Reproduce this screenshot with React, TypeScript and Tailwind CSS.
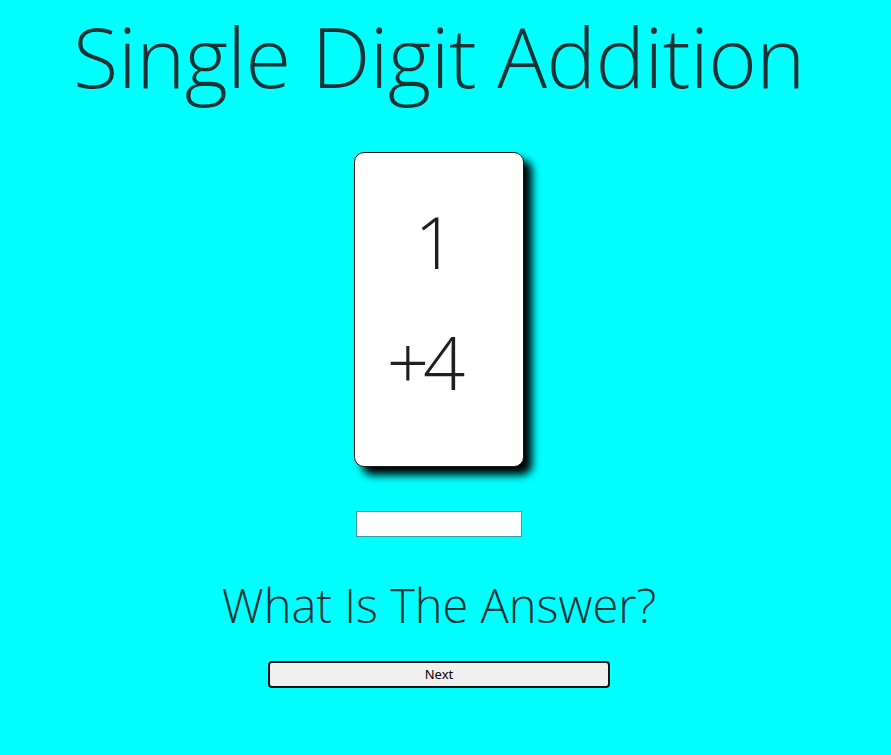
export default function App() {
  return (
    <div className="min-h-screen w-full bg-[#00ffff]" style={{ fontFamily: '"Open Sans", "Noto Sans", sans-serif' }}>
      <div className="w-[878px] flex flex-col items-center">
        <h1 className="mt-[1px] text-[83px] leading-[110px] font-light text-[#1c3134] tracking-[-0.5px] whitespace-nowrap">
          Single Digit Addition
        </h1>

        <div className="mt-[41px] w-[170px] h-[315px] bg-white border border-[#1a1a1a] rounded-[10px] shadow-[8px_8px_8px_rgba(0,0,0,1)] flex flex-col items-center text-[#1f1f1f] font-light">
          <div className="mt-[44px] ml-[-8px] text-[71px] leading-[90px]">1</div>
          <div className="mt-[30px] ml-[-32px] text-[74px] leading-[90px] tracking-[-6px]">+4</div>
        </div>

        <input
          type="text"
          className="mt-[44px] w-[166px] h-[26px] bg-white border border-[#3b9aa0] outline-none"
        />

        <div className="mt-[38px] text-[47px] leading-[60px] font-light text-[#1c3134]">
          What Is The Answer?
        </div>

        <button className="mt-[26px] w-[342px] h-[27px] bg-[#efefef] border-2 border-[#111] rounded-[4px] text-[13px] text-black leading-none" style={{ fontFamily: '"Noto Sans", sans-serif' }}>
          Next
        </button>
      </div>
    </div>
  );
}
